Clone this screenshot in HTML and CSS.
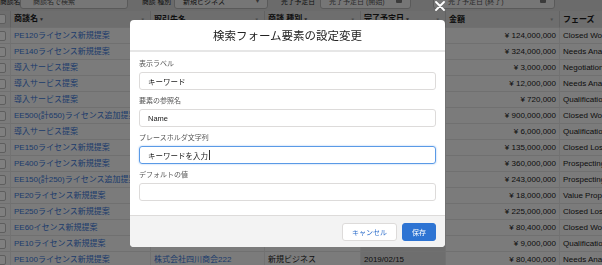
FILE: index.html
```html
<!DOCTYPE html>
<html lang="ja">
<head>
    <meta charset="UTF-8">
    <meta name="viewport" content="width=device-width, initial-scale=1.0">
    <title>商談一覧 - 検索フォーム要素の設定変更</title>
    <link rel="stylesheet" href="styles.css">
</head>
<body>
    <div class="page">
        <div class="filter-bar">
            <span class="filter-label label-name">商談名</span>
            <div class="filter-input input-name">商談名で検索</div>
            <span class="filter-label label-type">商談 種別</span>
            <div class="filter-input input-type">新規ビジネス<span class="select-arrow">▾</span></div>
            <span class="filter-label label-date">完了予定日</span>
            <div class="filter-input input-from">完了予定日 (開始)<span class="cal-icon"></span></div>
            <div class="filter-input input-to">完了予定日 (終了)<span class="cal-icon"></span></div>
        </div>

        <table class="deal-table">
            <colgroup>
                <col style="width: 11px">
                <col style="width: 140px">
                <col style="width: 114px">
                <col style="width: 96px">
                <col style="width: 85px">
                <col style="width: 114px">
                <col style="width: 80px">
            </colgroup>
            <thead>
                <tr>
                    <th class="check-cell"><span class="check-box"></span></th>
                    <th><div class="th-inner"><span>商談名<span class="sort-mark">▼</span></span><span class="col-menu">▼</span></div></th>
                    <th><div class="th-inner"><span>取引先名</span><span class="col-menu">▼</span></div></th>
                    <th><div class="th-inner"><span>商談 種別<span class="sort-mark">▼</span></span><span class="col-menu">▼</span></div></th>
                    <th><div class="th-inner"><span>完了予定日<span class="sort-mark">▼</span></span><span class="col-menu">▼</span></div></th>
                    <th><div class="th-inner"><span>金額</span><span class="col-menu">▼</span></div></th>
                    <th><div class="th-inner"><span>フェーズ</span></div></th>
                </tr>
            </thead>
            <tbody>
                <tr><td class="check-cell"><span class="check-box"></span></td><td><a class="link">PE120ライセンス新規提案</a></td><td></td><td></td><td class="date-cell"></td><td class="amount">¥ 124,000,000</td><td>Closed Won</td></tr>
                <tr><td class="check-cell"><span class="check-box"></span></td><td><a class="link">PE140ライセンス新規提案</a></td><td></td><td></td><td class="date-cell"></td><td class="amount">¥ 324,000,000</td><td>Needs Analysis</td></tr>
                <tr><td class="check-cell"><span class="check-box"></span></td><td><a class="link">導入サービス提案</a></td><td></td><td></td><td class="date-cell"></td><td class="amount">¥ 3,000,000</td><td>Negotiation</td></tr>
                <tr><td class="check-cell"><span class="check-box"></span></td><td><a class="link">導入サービス提案</a></td><td></td><td></td><td class="date-cell"></td><td class="amount">¥ 12,000,000</td><td>Needs Analysis</td></tr>
                <tr><td class="check-cell"><span class="check-box"></span></td><td><a class="link">導入サービス提案</a></td><td></td><td></td><td class="date-cell"></td><td class="amount">¥ 720,000</td><td>Qualification</td></tr>
                <tr><td class="check-cell"><span class="check-box"></span></td><td><a class="link">EE500(計650)ライセンス追加提案</a></td><td></td><td></td><td class="date-cell"></td><td class="amount">¥ 900,000,000</td><td>Closed Won</td></tr>
                <tr><td class="check-cell"><span class="check-box"></span></td><td><a class="link">導入サービス提案</a></td><td></td><td></td><td class="date-cell"></td><td class="amount">¥ 6,000,000</td><td>Qualification</td></tr>
                <tr><td class="check-cell"><span class="check-box"></span></td><td><a class="link">PE150ライセンス新規提案</a></td><td></td><td></td><td class="date-cell"></td><td class="amount">¥ 135,000,000</td><td>Closed Lost</td></tr>
                <tr><td class="check-cell"><span class="check-box"></span></td><td><a class="link">PE400ライセンス新規提案</a></td><td></td><td></td><td class="date-cell"></td><td class="amount">¥ 360,000,000</td><td>Prospecting</td></tr>
                <tr><td class="check-cell"><span class="check-box"></span></td><td><a class="link">EE150(計250)ライセンス追加提案</a></td><td></td><td></td><td class="date-cell"></td><td class="amount">¥ 243,000,000</td><td>Prospecting</td></tr>
                <tr><td class="check-cell"><span class="check-box"></span></td><td><a class="link">PE20ライセンス新規提案</a></td><td></td><td></td><td class="date-cell"></td><td class="amount">¥ 18,000,000</td><td>Value Proposition</td></tr>
                <tr><td class="check-cell"><span class="check-box"></span></td><td><a class="link">PE250ライセンス新規提案</a></td><td></td><td></td><td class="date-cell"></td><td class="amount">¥ 225,000,000</td><td>Closed Lost</td></tr>
                <tr><td class="check-cell"><span class="check-box"></span></td><td><a class="link">EE60イセンス新規提案</a></td><td></td><td></td><td class="date-cell"></td><td class="amount">¥ 80,400,000</td><td>Closed Won</td></tr>
                <tr><td class="check-cell"><span class="check-box"></span></td><td><a class="link">PE10ライセンス新規提案</a></td><td></td><td></td><td class="date-cell"></td><td class="amount">¥ 9,000,000</td><td>Qualification</td></tr>
                <tr><td class="check-cell"><span class="check-box"></span></td><td><a class="link">PE100ライセンス新規提案</a></td><td><a class="link">株式会社四川商会222</a></td><td>新規ビジネス</td><td class="date-cell">2019/02/15</td><td class="amount">¥ 80,400,000</td><td>Needs Analysis</td></tr>
            </tbody>
        </table>
    </div>

    <div class="backdrop">
        <button class="modal-close" aria-label="閉じる">
            <svg width="10" height="10" viewBox="0 0 10 10"><path d="M1 1 L9 9 M9 1 L1 9" stroke="#fff" stroke-width="1.8" stroke-linecap="round"/></svg>
        </button>
        <div class="modal">
            <div class="modal-header">検索フォーム要素の設定変更</div>
            <div class="modal-body">
                <div class="field">
                    <div class="field-label">表示ラベル</div>
                    <div class="field-box">キーワード</div>
                </div>
                <div class="field">
                    <div class="field-label">要素の参照名</div>
                    <div class="field-box">Name</div>
                </div>
                <div class="field">
                    <div class="field-label">プレースホルダ文字列</div>
                    <div class="field-box is-focused">キーワードを入力<span class="caret"></span></div>
                </div>
                <div class="field">
                    <div class="field-label">デフォルトの値</div>
                    <div class="field-box"></div>
                </div>
            </div>
            <div class="modal-footer">
                <button class="btn btn-neutral">キャンセル</button>
                <button class="btn btn-brand">保存</button>
            </div>
        </div>
    </div>
</body>
</html>
```

FILE: styles.css
```css
/* 商談一覧 + 設定モーダル */
body {
    margin: 0;
    width: 602px;
    height: 265px;
    overflow: hidden;
    font-family: "Liberation Sans", "Noto Sans CJK JP", sans-serif;
    color: #1a1a1a;
    background-color: #f6f6f6;
}
.page {
    margin-top: -10px;
}

/* 検索フィルタ */
.filter-bar {
    display: flex;
    align-items: center;
    height: 21px;
    background-color: #d6d6d6;
}
.filter-label {
    font-size: 6.8px;
    color: #222;
    white-space: nowrap;
}
.label-name {
    width: 20px;
    text-align: right;
    padding-right: 0;
}
.label-type {
    margin-left: 14px;
    width: 28px;
}
.label-date {
    margin-left: 13px;
    width: 37px;
}
.filter-input {
    position: relative;
    height: 16px;
    box-sizing: border-box;
    border: 1px solid #b5b5b5;
    border-radius: 3px;
    background-color: #ececec;
    font-size: 7px;
    color: #555;
    display: flex;
    align-items: center;
    padding: 0 8px;
    white-space: nowrap;
}
.input-name {
    width: 108px;
    padding-left: 12px;
}
.input-type {
    margin-left: 4px;
    width: 94px;
    justify-content: space-between;
    color: #222;
}
.input-from {
    margin-left: 2px;
    width: 91px;
    justify-content: space-between;
}
.input-to {
    margin-left: 22px;
    width: 122px;
    justify-content: space-between;
    padding-left: 14px;
}
.select-arrow {
    font-size: 6px;
    color: #666;
}
.cal-icon {
    width: 6px;
    height: 5px;
    background-color: #777;
    border-radius: 1px;
}

/* 一覧 */
.deal-table {
    border-collapse: separate;
    border-spacing: 0;
    table-layout: fixed;
    width: 640px;
    font-size: 8px;
}
.deal-table th, .deal-table td {
    height: 15px;
    line-height: 15px;
    padding: 0 3px;
    border-bottom: 1px solid #e0e0e0;
    border-right: 1px solid #e4e4e4;
    white-space: nowrap;
    overflow: hidden;
    text-align: left;
}
.deal-table th {
    background-color: #dcdcdc;
    font-weight: 700;
    border-right-color: #c4c4c4;
}
.deal-table td {
    background-color: #f6f6f6;
}
.deal-table td.date-cell {
    background-color: #dcdcdc;
}
.deal-table td.amount {
    text-align: right;
}
.deal-table .check-cell {
    padding: 0;
}
.check-box {
    display: block;
    width: 10px;
    height: 10px;
    margin-left: -4px;
    box-sizing: border-box;
    border: 1px solid #bdbdbd;
    border-radius: 2px;
    background-color: #fff;
}
.th-inner {
    display: flex;
    justify-content: space-between;
    align-items: center;
}
.sort-mark {
    font-size: 5px;
    color: #555;
    margin-left: 1px;
}
.col-menu {
    font-size: 4.5px;
    color: #999;
    margin-right: 2px;
}
.link {
    color: #3b78d8;
    text-decoration: none;
}

/* モーダル */
.backdrop {
    position: fixed;
    inset: 0;
    background-color: rgba(0, 0, 0, 0.5);
}
.modal-close {
    position: absolute;
    left: 435px;
    top: 1px;
    width: 10px;
    height: 10px;
    padding: 0;
    border: 0;
    background: none;
    display: flex;
}
.modal {
    position: absolute;
    left: 130px;
    top: 20px;
    width: 315px;
    background-color: #fff;
    border-radius: 4px;
    overflow: hidden;
}
.modal-header {
    height: 30px;
    border-bottom: 2px solid #e6e6e6;
    display: flex;
    align-items: center;
    justify-content: center;
    font-size: 11.5px;
    color: #222;
    font-family: "Noto Sans CJK JP", sans-serif;
}
.modal-body {
    padding: 7px 9px 8px;
}
.field {
    margin-bottom: 6px;
}
.field-label {
    font-size: 7px;
    line-height: 10px;
    margin-bottom: 3px;
    color: #555;
}
.field-box {
    height: 18px;
    box-sizing: border-box;
    border: 1px solid #dddbda;
    border-radius: 3px;
    padding: 0 8px;
    display: flex;
    align-items: center;
    font-size: 7.5px;
    color: #181818;
}
.field-box.is-focused {
    border-color: #5a9ae6;
    box-shadow: 0 0 2px #9cc3f2;
}
.caret {
    width: 1px;
    height: 10px;
    margin-left: 1px;
    background-color: #333;
}
.modal-footer {
    height: 31px;
    border-top: 1px solid #dddbda;
    background-color: #f3f3f3;
    display: flex;
    justify-content: flex-end;
    align-items: center;
    gap: 5px;
    padding-right: 9px;
}
.btn {
    height: 18px;
    box-sizing: border-box;
    border-radius: 3px;
    font-size: 7px;
    font-family: "Noto Sans CJK JP", sans-serif;
    padding: 0;
}
.btn-neutral {
    width: 55px;
    background-color: #fff;
    border: 1px solid #dddbda;
    color: #2f6fcc;
}
.btn-brand {
    width: 34px;
    background-color: #2e74d3;
    border: 1px solid #2e74d3;
    color: #fff;
}
```
